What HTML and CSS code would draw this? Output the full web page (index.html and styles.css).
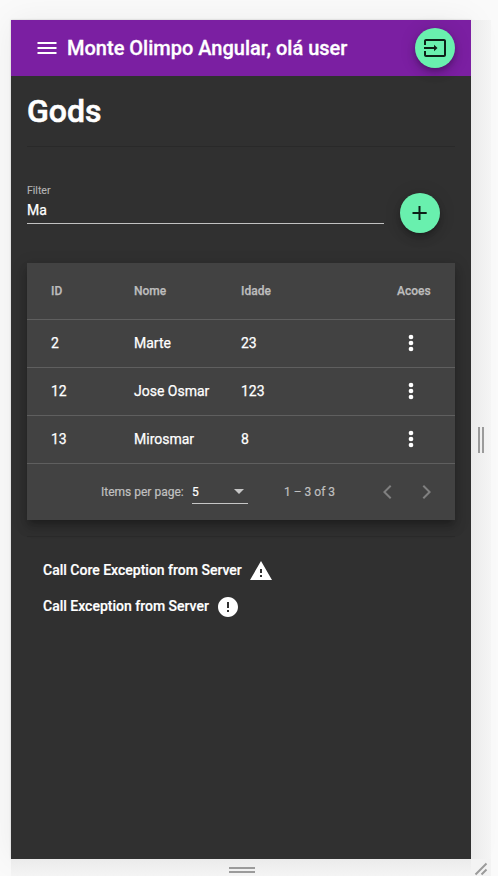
FILE: index.html
```html
<!DOCTYPE html>
<html lang="pt">
<head>
<meta charset="utf-8">
<title>Monte Olimpo Angular</title>
<link rel="stylesheet" href="styles.css">
</head>
<body>
<div class="stage">
  <div class="device">
    <header class="toolbar">
      <svg class="menu" viewBox="0 0 24 24"><path d="M2.500 18h19v-2h-19v2zm0-5h19v-2h-19v2zm0-7v2h19V6h-19z"/></svg>
      <span class="title">Monte Olimpo Angular, olá user</span>
      <button class="fab" aria-label="Sair"><svg viewBox="0 0 24 24"><path d="M21 3.01H3c-1.1 0-2 .9-2 2V9h2V4.99h18v14.03H3V15H1v4.01c0 1.1.9 1.98 2 1.98h18c1.1 0 2-.88 2-1.98v-14c0-1.11-.9-2-2-2zM11 15.200l3.500-3.200L11 8.800V11H1v2h10v2.200z"/></svg></button>
    </header>
    <main class="content">
      <h1>Gods</h1>
      <div class="rule"></div>
      <div class="filter-row">
        <label class="field"><span class="label">Filter</span><span class="value">Ma</span></label>
        <button class="fab" aria-label="Adicionar"><svg viewBox="0 0 24 24"><path d="M18.700 13h-6.200v6h-2v-6H4.500v-2h6V5h2v6h6.200v2z"/></svg></button>
      </div>
      <section class="card">
        <div class="row head"><span>ID</span><span>Nome</span><span>Idade</span><span>Acoes</span></div>
        <div class="row"><span>2</span><span>Marte</span><span>23</span><svg class="more" viewBox="0 0 24 24"><circle cx="12" cy="6" r="2.350"/><circle cx="12" cy="12" r="2.350"/><circle cx="12" cy="18" r="2.350"/></svg></div>
        <div class="row"><span>12</span><span>Jose Osmar</span><span>123</span><svg class="more" viewBox="0 0 24 24"><circle cx="12" cy="6" r="2.350"/><circle cx="12" cy="12" r="2.350"/><circle cx="12" cy="18" r="2.350"/></svg></div>
        <div class="row"><span>13</span><span>Mirosmar</span><span>8</span><svg class="more" viewBox="0 0 24 24"><circle cx="12" cy="6" r="2.350"/><circle cx="12" cy="12" r="2.350"/><circle cx="12" cy="18" r="2.350"/></svg></div>
        <div class="paginator">
          <span class="per-page">Items per page:</span>
          <div class="select"><span>5</span><i class="arrow"></i></div>
          <span class="range">1 – 3 of 3</span>
          <svg class="nav" viewBox="0 0 24 24"><path d="M16.410 6.410L15 5l-7 7 7 7 1.410-1.410L10.830 12z"/></svg>
          <svg class="nav" viewBox="0 0 24 24"><path d="M9 5L7.590 6.410 13.170 12l-5.580 5.590L9 19l7-7z"/></svg>
        </div>
      </section>
      <div class="rule after-card"></div>
      <div class="links">
        <div class="link"><span>Call Core Exception from Server</span><svg viewBox="0 0 24 24"><path d="M1 21h22L12 2 1 21zm12-3h-2v-2h2v2zm0-4h-2v-4h2v4z"/></svg></div>
        <div class="link"><span>Call Exception from Server</span><svg viewBox="0 0 24 24"><path d="M12 2C6.48 2 2 6.480 2 12s4.480 10 10 10 10-4.480 10-10S17.520 2 12 2zm1 15h-2v-2h2v2zm0-4h-2V7h2v6z"/></svg></div>
      </div>
    </main>
  </div>
  <div class="grip-right"><i></i><i></i></div>
  <div class="grip-bottom"><i></i><i></i></div>
  <div class="grip-corner"><svg viewBox="0 0 20 17"><path d="M4.500 15.500L15.500 4.500M10.500 15.500L15.500 10.500"/></svg></div>
</div>
</body>
</html>
```
FILE: styles.css
```css
* { box-sizing: border-box; }

body {
  margin: 0;
  background: #fafafa;
  font-family: Roboto, sans-serif;
  color: #fff;
}

.stage {
  display: grid;
  grid-template-columns: 460px 20px;
  grid-template-rows: 839px 17px;
  height: 876px;
  padding: 20px 0 0 11px;
  overflow: hidden;
}

.device {
  background: #303030;
  box-shadow: 0 0 2px rgba(0, 0, 0, .2), 0 0 32px rgba(0, 0, 0, .06);
}

.toolbar {
  display: flex;
  align-items: center;
  height: 56px;
  padding: 0 16px 0 24px;
  background: #7b1fa2;
}

svg { display: block; fill: currentColor; flex: none; }
.menu { width: 24px; height: 24px; }

.title {
  flex: 1;
  margin-left: 8px;
  font-size: 20px;
  font-weight: 500;
  line-height: 32px;
  white-space: nowrap;
  -webkit-text-stroke: .3px;
}

.fab {
  display: grid;
  place-items: center;
  width: 40px;
  height: 40px;
  padding: 0;
  border: 0;
  border-radius: 50%;
  background: #69f0ae;
  color: rgba(0, 0, 0, .87);
  box-shadow: 0 3px 5px -1px rgba(0, 0, 0, .2), 0 6px 10px rgba(0, 0, 0, .14), 0 1px 18px rgba(0, 0, 0, .12);
}
.fab svg { width: 24px; height: 24px; }

.content { padding: 16px; }

h1 {
  margin: 0;
  font-size: 32px;
  font-weight: 500;
  line-height: 38px;
  -webkit-text-stroke: .6px;
}

.rule { height: 1px; margin-top: 16px; background: #292929; }

.filter-row {
  display: flex;
  align-items: flex-start;
  gap: 16px;
  height: 116px;
  padding: 36px 15px 0 0;
}
.filter-row .fab { margin-top: 10px; }

.field {
  flex: 1;
  height: 41px;
  border-bottom: 1px solid #c1c1c1;
}
.field span { display: block; }
.label { padding-top: 1px; font-size: 10.5px; line-height: 13px; color: #b3b3b3; -webkit-text-stroke: .15px; }
.value { padding-top: 5px; font-size: 14px; line-height: 16px; -webkit-text-stroke: .25px; }

.card {
  height: 257px;
  background: #424242;
  box-shadow: 0 5px 5px -3px rgba(0, 0, 0, .2), 0 8px 10px 1px rgba(0, 0, 0, .14), 0 3px 14px 2px rgba(0, 0, 0, .12);
}

.row {
  display: grid;
  grid-template-columns: 83px 107px 156px 1fr;
  align-items: center;
  height: 48px;
  padding: 0 0 1px 24px;
  border-bottom: 1px solid #5f5f5f;
  font-size: 14px;
  -webkit-text-stroke: .25px;
}
.row.head {
  height: 57px;
  padding-bottom: 0;
  color: #bdbdbd;
  font-size: 12px;
  font-weight: 500;
}
.more { width: 24px; height: 24px; margin-left: 2px; }

.paginator {
  display: flex;
  align-items: center;
  height: 56px;
  padding-left: 74px;
  color: #c0c0c0;
  font-size: 12px;
  -webkit-text-stroke: .2px;
}
.per-page { width: 83px; white-space: nowrap; }
.select {
  display: flex;
  align-items: center;
  justify-content: space-between;
  width: 56px;
  height: 24px;
  margin-left: 8px;
  padding-right: 4px;
  border-bottom: 1px solid #c6c6c6;
}
.select span { color: #fff; }
.arrow {
  border: 5px solid transparent;
  border-top-color: #c6c6c6;
  border-bottom: 0;
}
.range { width: 91px; margin-left: 36px; }
.nav { width: 24px; height: 24px; color: #808080; }
.nav + .nav { margin-left: 16px; }

.links { padding: 15px 16px 0; }
.link {
  display: flex;
  align-items: center;
  height: 36px;
  font-size: 14px;
  font-weight: 500;
  white-space: nowrap;
  -webkit-text-stroke: .2px;
}
.link svg { width: 24px; height: 24px; margin: 2px 0 0 7px; }

.more, .nav, .link svg { -webkit-text-stroke: 0; }

.grip-right, .grip-bottom {
  display: flex;
  align-items: center;
  justify-content: center;
  gap: 2px;
}
.grip-right { background: linear-gradient(90deg, #ebebeb, #f5f5f5); }
.grip-right i { width: 2px; height: 26px; background: #9b9b9b; }
.grip-bottom {
  flex-direction: column;
  padding: 5px 0 0 2px;
  background: linear-gradient(#ebebeb, #f4f4f4);
}
.grip-bottom i { width: 26px; height: 2px; background: #9b9b9b; }
.grip-corner { background: #f3f3f3; }
.grip-corner svg { width: 20px; height: 17px; fill: none; stroke: #9b9b9b; stroke-width: 2; }
```
